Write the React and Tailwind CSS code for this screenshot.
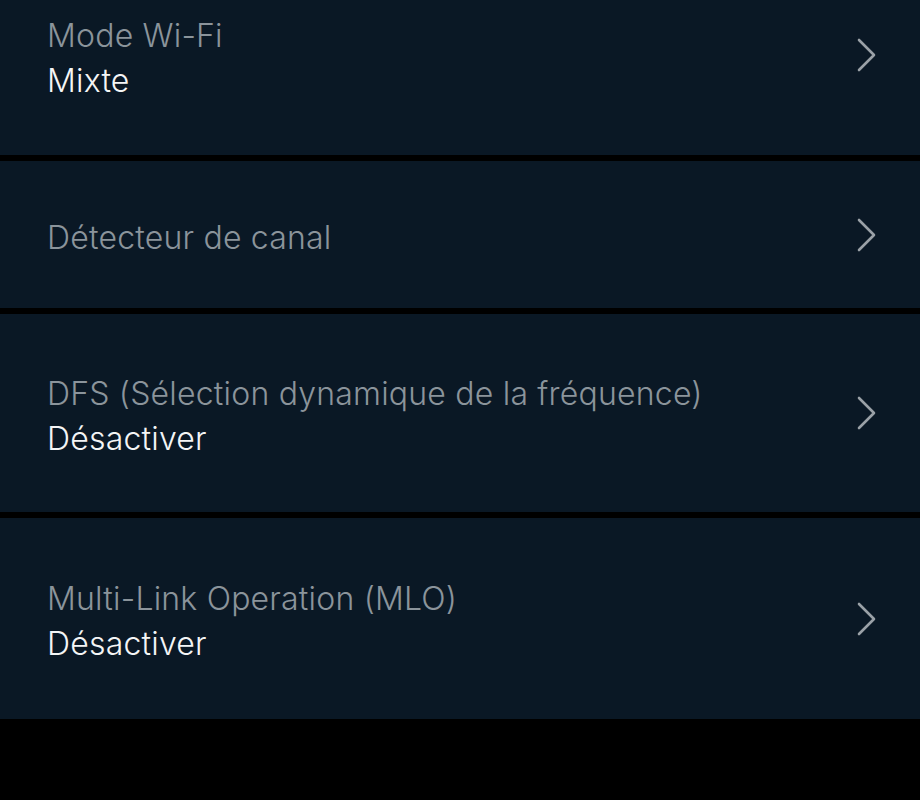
const rows = [
  { label: "Mode Wi-Fi", value: "Mixte", h: "h-[200px]" },
  { label: "Détecteur de canal", h: "h-[147px]" },
  { label: "DFS (Sélection dynamique de la fréquence)", value: "Désactiver", h: "h-[198px]" },
  { label: "Multi-Link Operation (MLO)", value: "Désactiver", h: "h-[201px]" },
];

function Chevron() {
  return (
    <svg width="22" height="34" viewBox="0 0 22 34" fill="none" className="shrink-0">
      <path d="M3 2 L18 17 L3 32" stroke="#9aa1a7" strokeWidth="2.6" strokeLinecap="round" strokeLinejoin="round" />
    </svg>
  );
}

export default function App() {
  return (
    <div className="w-[920px] h-[800px] bg-black overflow-hidden" style={{ fontFamily: "Inter, 'Noto Sans', sans-serif" }}>
      <div className="flex flex-col gap-[6px] -mt-[45px]">
        {rows.map((r) => (
          <div key={r.label} className={`${r.h} bg-[#0a1825] flex items-center pl-[47px] pr-[42px]`}>
            <div className="flex-1 flex flex-col gap-[7px] pt-[6px] font-light tracking-[0.2px]">
              <div className="text-[32px] leading-[38px] text-[#8b949b]">{r.label}</div>
              {r.value && <div className="text-[32px] leading-[38px] text-[#f4f5f6]">{r.value}</div>}
            </div>
            <Chevron />
          </div>
        ))}
      </div>
    </div>
  );
}
